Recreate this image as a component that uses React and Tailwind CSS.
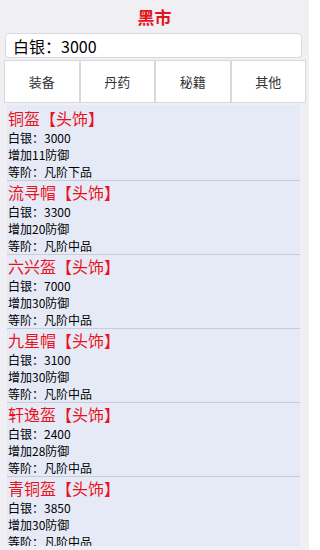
import React from "react";

const items = [
  { name: "铜盔", price: 3000, def: 11, grade: "凡阶下品" },
  { name: "流寻帽", price: 3300, def: 20, grade: "凡阶中品" },
  { name: "六兴盔", price: 7000, def: 30, grade: "凡阶中品" },
  { name: "九星帽", price: 3100, def: 30, grade: "凡阶中品" },
  { name: "轩逸盔", price: 2400, def: 28, grade: "凡阶中品" },
  { name: "青铜盔", price: 3850, def: 30, grade: "凡阶中品" },
];

export default function App() {
  return (
    <div
      className="w-[309px] h-[550px] bg-[#efeff4] overflow-hidden flex flex-col"
      style={{ fontFamily: '"Noto Sans CJK SC", "Noto Sans", sans-serif' }}
    >
      <div className="h-[33px] flex items-center justify-center text-[17px] font-bold text-[#e3141c] shrink-0">
        黑市
      </div>
      <div className="ml-[5px] w-[297px] h-[25px] bg-white border border-[#dadade] rounded-[4px] px-[7px] flex items-center text-[16px] text-[#000] shrink-0">
        白银：3000
      </div>
      <div className="mt-[2px] ml-[4px] w-[302px] h-[43px] bg-[#d9d9dc] p-px grid grid-cols-4 gap-[2px] shrink-0">
        {["装备", "丹药", "秘籍", "其他"].map((t) => (
          <div key={t} className="bg-white flex items-center justify-center text-[13px] text-[#333]">
            {t}
          </div>
        ))}
      </div>
      <div className="mt-[2px] ml-[7px] w-[293px] h-[441px] bg-[#e6eaf6] overflow-hidden pt-[2px] shrink-0">
        {items.map((it, i) => (
          <div key={i} className="border-b border-[#c9ccd6] pl-px">
            <div className="text-[16px] leading-[22px] text-[#e8141e]">{it.name}【头饰】</div>
            <div className="text-[12px] leading-[17px] text-[#000]">
              <div>白银：{it.price}</div>
              <div>增加{it.def}防御</div>
              <div>等阶：{it.grade}</div>
            </div>
          </div>
        ))}
      </div>
    </div>
  );
}
